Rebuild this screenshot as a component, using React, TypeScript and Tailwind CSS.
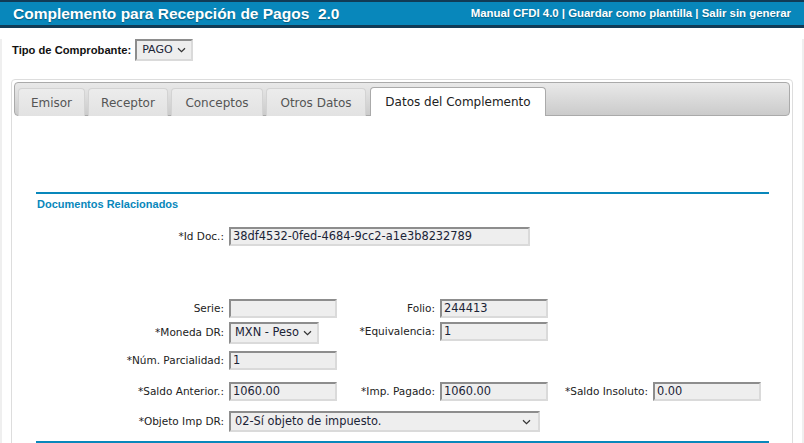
import React from "react";

const lbl = "text-[10.5px] leading-[19px] text-[#222] font-['DejaVu_Sans',sans-serif] text-right pr-[5px] whitespace-nowrap";
const box =
  "h-[19px] border-2 border-t-[#8d8d8d] border-l-[#8d8d8d] border-r-[#dadada] border-b-[#dadada] bg-[#eeeeee] pl-[2px] text-[11.4px] leading-[15px] text-[#1b2336] font-['DejaVu_Sans',sans-serif] whitespace-nowrap overflow-hidden";

function Chevron() {
  return (
    <svg width="9" height="6" viewBox="0 0 9 6" className="shrink-0">
      <path d="M1 1.2l3.5 3.4L8 1.2" stroke="#333" strokeWidth="1.2" fill="none" />
    </svg>
  );
}

function Select({ value, className }: { value: string; className: string }) {
  return (
    <div
      className={`flex items-center justify-between border-2 border-t-[#8d8d8d] border-l-[#8d8d8d] border-r-[#dadada] border-b-[#dadada] bg-[#eeeeee] pl-[4px] pr-[5px] text-[11.4px] text-[#1b2336] font-['DejaVu_Sans',sans-serif] whitespace-nowrap ${className}`}
    >
      <span>{value}</span>
      <Chevron />
    </div>
  );
}

const tabs = [
  { name: "Emisor", w: "w-[67px]" },
  { name: "Receptor", w: "w-[80px]" },
  { name: "Conceptos", w: "w-[92px]" },
  { name: "Otros Datos", w: "w-[100px]" },
];

const grid = "grid grid-cols-[193px_108px_103px_108px_105px_108px] items-start";

export default function App() {
  return (
    <div className="h-[443px] w-[804px] overflow-hidden bg-white font-['Liberation_Sans',Arial,sans-serif]">
      {/* header */}
      <div className="flex h-[28px] items-center justify-between border-t-2 border-b-[3px] border-[#113b56] bg-[#0887bb] pl-[13px] pr-[13px]">
        <span className="text-[15.5px] font-bold text-white [text-shadow:0_1px_1px_rgba(0,0,0,0.35)] whitespace-pre">
          Complemento para Recepción de Pagos  2.0
        </span>
        <span className="text-[11.4px] font-bold text-white [text-shadow:0_1px_1px_rgba(0,0,0,0.3)]">
          Manual CFDI 4.0 | Guardar como plantilla | Salir sin generar
        </span>
      </div>

      <div className="h-[415px] border-x-2 border-[#efefef] px-[9px]">
        {/* tipo comprobante */}
        <div className="mt-[11px] flex items-center gap-[4px] pl-[1px]">
          <span className="text-[11.2px] font-bold text-[#111]">Tipo de Comprobante:</span>
          <Select value="PAGO" className="h-[22px] w-[58px] text-[11px] pl-[5px]" />
        </div>

        {/* tabs widget */}
        <div className="mt-[18px] h-[400px] rounded-[4px] border border-[#dddddd] p-[2px]">
          <div className="flex h-[34px] items-end gap-[3px] rounded-[4px] border border-[#aaaaaa] bg-gradient-to-b from-[#e9e9e9] to-[#cbcbcb] pl-[3px]">
            {tabs.map((t) => (
              <div
                key={t.name}
                className={`${t.w} -mb-px flex h-[28px] items-center justify-center rounded-t-[4px] border border-b-0 border-[#d3d3d3] bg-gradient-to-b from-[#ececec] to-[#e2e2e2] text-[12px] text-[#555] font-['DejaVu_Sans',sans-serif]`}
              >
                {t.name}
              </div>
            ))}
            <div className="-mb-px ml-[1px] flex h-[29px] w-[176px] items-center justify-center rounded-t-[4px] border border-b-0 border-[#aaaaaa] bg-white pb-[1px] text-[12px] text-[#212121] font-['DejaVu_Sans',sans-serif]">
              Datos del Complemento
            </div>
          </div>

          {/* panel */}
          <div className="px-[21px] pl-[22px]">
            <div className="mt-[76px] h-[2px] bg-[#0887bb]" />
            <div className="mt-[4px] pl-[1px] text-[11px] font-bold leading-[13px] text-[#0887bb]">Documentos Relacionados</div>

            <div className={`${grid} mt-[16px]`}>
              <div className={lbl}>*Id Doc.:</div>
              <div className={`${box} col-span-3 w-[301px]`}>38df4532-0fed-4684-9cc2-a1e3b8232789</div>
            </div>

            <div className={`${grid} mt-[53px]`}>
              <div className={lbl}>Serie:</div>
              <div className={box}></div>
              <div className={`${lbl} pr-[4px]`}>Folio:</div>
              <div className={box}>244413</div>
            </div>

            <div className={`${grid} mt-[4px]`}>
              <div className={`${lbl} leading-[20px]`}>*Moneda DR:</div>
              <Select value="MXN - Peso" className="h-[22px] w-[90px]" />
              <div className={`${lbl} pr-[4px]`}>*Equivalencia:</div>
              <div className={box}>1</div>
            </div>

            <div className={`${grid} mt-[7px]`}>
              <div className={lbl}>*Núm. Parcialidad:</div>
              <div className={box}>1</div>
            </div>

            <div className={`${grid} mt-[12px]`}>
              <div className={lbl}>*Saldo Anterior.:</div>
              <div className={box}>1060.00</div>
              <div className={`${lbl} pr-[4px]`}>*Imp. Pagado:</div>
              <div className={box}>1060.00</div>
              <div className={`${lbl} pr-[4px]`}>*Saldo Insoluto:</div>
              <div className={box}>0.00</div>
            </div>

            <div className={`${grid} mt-[10px]`}>
              <div className={`${lbl} leading-[21px]`}>*Objeto Imp DR:</div>
              <Select value="02-Sí objeto de impuesto." className="col-span-3 h-[21px] w-[311px] pr-[7px]" />
            </div>

            <div className="mt-[9px] h-[2px] bg-[#0887bb]" />
          </div>
        </div>
      </div>
    </div>
  );
}
